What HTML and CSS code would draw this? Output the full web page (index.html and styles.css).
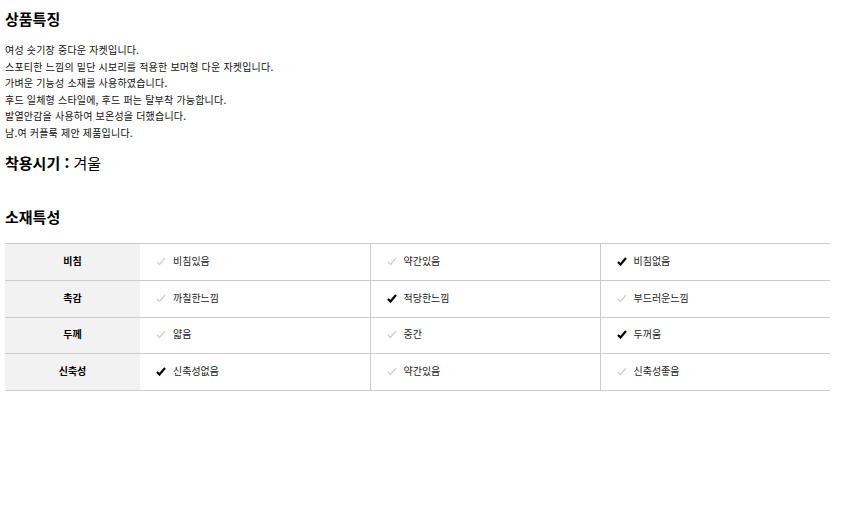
FILE: index.html
```html
<!DOCTYPE html>
<html lang="ko">
<head>
<meta charset="utf-8">
<link rel="stylesheet" href="styles.css">
</head>
<body>
<div class="page">
  <h2 class="title">상품특징</h2>
  <p class="desc">여성 숏기장 중다운 자켓입니다.<br>스포티한 느낌의 밑단 시보리를 적용한 보머형 다운 자켓입니다.<br>가벼운 기능성 소재를 사용하였습니다.<br>후드 일체형 스타일에, 후드 퍼는 탈부착 가능합니다.<br>발열안감을 사용하여 보온성을 더했습니다.<br>남.여 커플룩 제안 제품입니다.</p>
  <h2 class="season"><b>착용시기 :</b> 겨울</h2>
  <h2 class="title material">소재특성</h2>
  <table class="spec">
    <colgroup>
      <col class="c-head">
      <col class="c-val">
      <col class="c-val">
      <col class="c-val">
    </colgroup>
    <tr>
      <th>비침</th>
      <td><span class="chk off"></span>비침있음</td>
      <td class="sep"><span class="chk off"></span>약간있음</td>
      <td class="sep"><span class="chk on"></span>비침없음</td>
    </tr>
    <tr>
      <th>촉감</th>
      <td><span class="chk off"></span>까칠한느낌</td>
      <td class="sep"><span class="chk on"></span>적당한느낌</td>
      <td class="sep"><span class="chk off"></span>부드러운느낌</td>
    </tr>
    <tr>
      <th>두께</th>
      <td><span class="chk off"></span>얇음</td>
      <td class="sep"><span class="chk off"></span>중간</td>
      <td class="sep"><span class="chk on"></span>두꺼움</td>
    </tr>
    <tr>
      <th>신축성</th>
      <td><span class="chk on"></span>신축성없음</td>
      <td class="sep"><span class="chk off"></span>약간있음</td>
      <td class="sep"><span class="chk off"></span>신축성좋음</td>
    </tr>
  </table>
</div>
</body>
</html>
```
FILE: styles.css
```css
html, body {
  margin: 0;
  padding: 0;
  background: #fff;
}
body {
  font-family: "Noto Sans CJK KR", "Noto Sans", sans-serif;
  color: #111;
}
.page {
  padding: 9px 13px 0 5px;
}
.title {
  font-size: 15px;
  line-height: 20px;
  font-weight: bold;
  margin: 0;
  color: #000;
}
.desc {
  font-size: 10px;
  line-height: 16.5px;
  letter-spacing: 0.2px;
  margin: 13px 0 0;
  color: #111;
}
.season {
  font-size: 15px;
  line-height: 20px;
  font-weight: normal;
  margin: 12px 0 0;
  color: #000;
}
.season b {
  font-weight: bold;
}
.material {
  margin-top: 34px;
}
.spec {
  margin-top: 16px;
  width: 825px;
  table-layout: fixed;
  border-collapse: collapse;
  border-top: 1px solid #ccc;
  font-size: 10px;
}
.c-head {
  width: 135px;
}
.c-val {
  width: 230px;
}
.spec tr {
  border-bottom: 1px solid #ccc;
}
.spec th,
.spec td {
  height: 33.75px;
  line-height: 14px;
  vertical-align: middle;
}
.spec th {
  padding: 0 0 2px;
  background: #f2f2f2;
  font-weight: bold;
  text-align: center;
  color: #000;
}
.spec td {
  padding: 0 0 2px 16px;
  text-align: left;
  color: #222;
  white-space: nowrap;
}
.spec td.sep {
  border-left: 1px solid #ccc;
}
.chk {
  display: inline-block;
  width: 10px;
  height: 9px;
  margin-right: 7px;
  vertical-align: -1px;
  background-repeat: no-repeat;
  background-size: 10px 9px;
}
.chk.off {
  background-image: url("data:image/svg+xml;utf8,<svg xmlns='http://www.w3.org/2000/svg' width='10' height='9' viewBox='0 0 10 9'><path d='M1 5 L3.5 7.5 L9 1' fill='none' stroke='%23d0d0d0' stroke-width='1.3'/></svg>");
}
.chk.on {
  background-image: url("data:image/svg+xml;utf8,<svg xmlns='http://www.w3.org/2000/svg' width='10' height='9' viewBox='0 0 10 9'><path d='M1 5 L3.5 7.5 L9 1' fill='none' stroke='%23000' stroke-width='2.2'/></svg>");
}
```
